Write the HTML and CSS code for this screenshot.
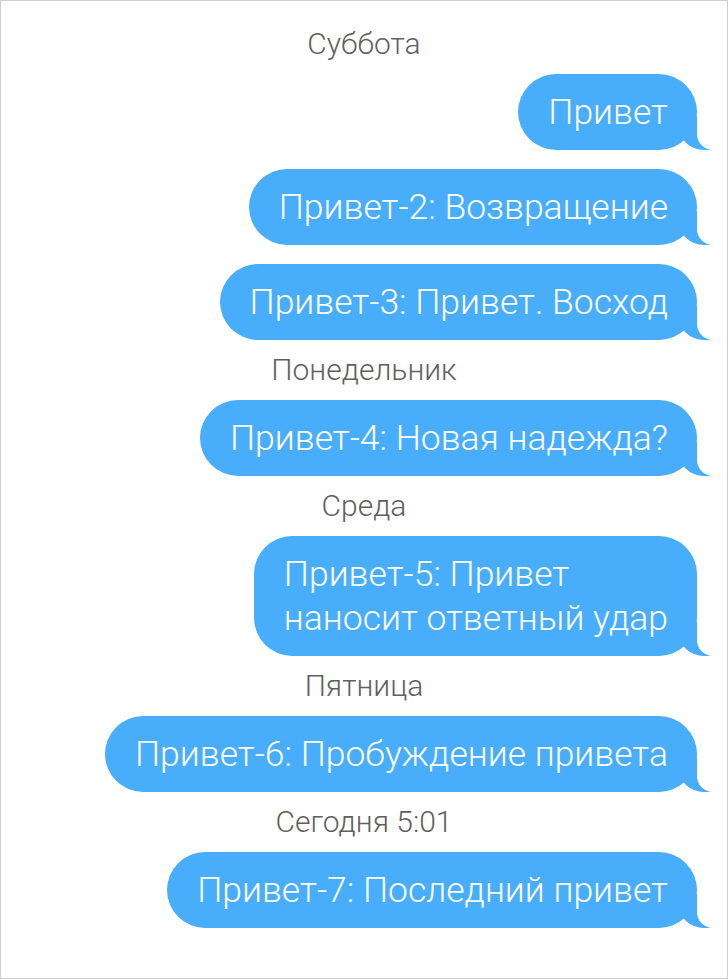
FILE: index.html
```html
<!DOCTYPE html>
<html lang="ru">
<head>
  <meta charset="UTF-8">
  <title>Привет</title>
  <link rel="stylesheet" href="styles.css">
</head>
<body>
  <div class="chat">
    <div class="day">Суббота</div>
    <div class="bubble">Привет</div>
    <div class="bubble">Привет-2: Возвращение</div>
    <div class="bubble">Привет-3: Привет. Восход</div>

    <div class="day">Понедельник</div>
    <div class="bubble">Привет-4: Новая надежда?</div>

    <div class="day">Среда</div>
    <div class="bubble">Привет-5: Привет<br>наносит ответный удар</div>

    <div class="day">Пятница</div>
    <div class="bubble">Привет-6: Пробуждение привета</div>

    <div class="day">Сегодня 5:01</div>
    <div class="bubble">Привет-7: Последний привет</div>
  </div>
</body>
</html>
```

FILE: styles.css
```css
html, body {
  margin: 0;
  height: 100%;
}

body {
  box-sizing: border-box;
  border: 1px solid #cfcfcf;
  background: #fff;
  font-family: Roboto, 'Noto Sans', sans-serif;
}

.chat {
  display: flex;
  flex-direction: column;
  align-items: flex-end;
  gap: 19px;
  padding: 32px 30px 0 30px;
}

.day {
  align-self: center;
  font-size: 30px;
  line-height: 22px;
  color: #5f5f5f;
  font-weight: 300;
}

.bubble {
  position: relative;
  padding: 16px 29px 16px 30px;
  background: #48adfb;
  color: #fff;
  font-size: 35.5px;
  font-weight: 300;
  line-height: 44px;
  border-radius: 38px;
  white-space: nowrap;
}

/* tail */
.bubble::before {
  content: "";
  position: absolute;
  bottom: 0;
  right: -15px;
  width: 34px;
  height: 34px;
  background: #48adfb;
  border-bottom-left-radius: 26px;
}

.bubble::after {
  content: "";
  position: absolute;
  bottom: 0;
  right: -22px;
  width: 22px;
  height: 36px;
  background: #fff;
  border-bottom-left-radius: 16px;
}
```
